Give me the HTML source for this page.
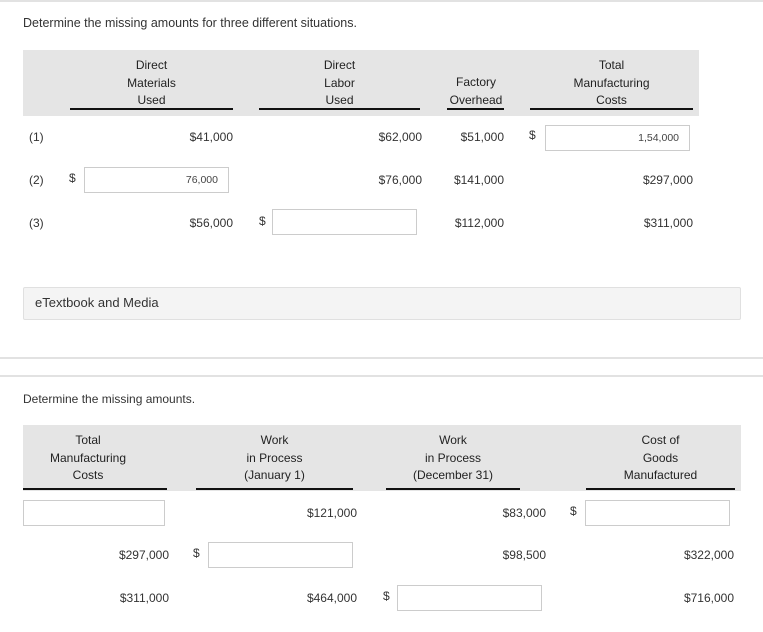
<!DOCTYPE html>
<html><head><meta charset="utf-8"><style>
*{margin:0;padding:0;box-sizing:border-box}
body{width:763px;height:632px;position:relative;background:#fff;font-family:"Liberation Sans",sans-serif;font-size:12px;color:#333;overflow:hidden}
.a{position:absolute;white-space:nowrap;line-height:14px}
.r{position:absolute;white-space:nowrap;line-height:14px;text-align:right}
.hb{position:absolute;background:#e5e5e5}
.ul{position:absolute;height:2px;background:#111}
.h{position:absolute;text-align:center;line-height:17.5px;font-size:12px;color:#222}
.in{position:absolute;border:1px solid #ccc;background:#fff;height:26px;font-size:10.5px;text-align:right;padding-right:10px;line-height:24px;color:#444}
.hl{position:absolute;left:0;width:763px;height:2px;background:#e2e2e2}
</style></head><body>
<div class="hl" style="top:0"></div>
<div class="a" style="left:23px;top:16px;font-size:12.5px">Determine the missing amounts for three different situations.</div>

<div class="hb" style="left:23px;top:50px;width:676px;height:66px"></div>
<div class="h" style="left:70px;width:163px;top:57px">Direct<br>Materials<br>Used</div>
<div class="h" style="left:259px;width:161px;top:57px">Direct<br>Labor<br>Used</div>
<div class="h" style="left:440px;width:72px;top:74px">Factory<br>Overhead</div>
<div class="h" style="left:530px;width:163px;top:57px">Total<br>Manufacturing<br>Costs</div>
<div class="ul" style="left:70px;width:163px;top:108px"></div>
<div class="ul" style="left:259px;width:161px;top:108px"></div>
<div class="ul" style="left:447px;width:57px;top:108px"></div>
<div class="ul" style="left:530px;width:163px;top:108px"></div>

<div class="a" style="left:29px;top:130px">(1)</div>
<div class="r" style="right:530px;top:130px">$41,000</div>
<div class="r" style="right:341px;top:130px">$62,000</div>
<div class="r" style="right:259px;top:130px">$51,000</div>
<div class="a" style="left:529px;top:128px">$</div>
<div class="in" style="left:545px;top:125px;width:145px">1,54,000</div>

<div class="a" style="left:29px;top:173px">(2)</div>
<div class="a" style="left:69px;top:171px">$</div>
<div class="in" style="left:84px;top:167px;width:145px">76,000</div>
<div class="r" style="right:341px;top:173px">$76,000</div>
<div class="r" style="right:259px;top:173px">$141,000</div>
<div class="r" style="right:70px;top:173px">$297,000</div>

<div class="a" style="left:29px;top:216px">(3)</div>
<div class="r" style="right:530px;top:216px">$56,000</div>
<div class="a" style="left:259px;top:214px">$</div>
<div class="in" style="left:272px;top:209px;width:145px"></div>
<div class="r" style="right:259px;top:216px">$112,000</div>
<div class="r" style="right:70px;top:216px">$311,000</div>

<div style="position:absolute;left:23px;top:287px;width:718px;height:33px;background:#f4f4f4;border:1px solid #e0e0e0;border-radius:2px"></div>
<div class="a" style="left:35px;top:296px;font-size:13px">eTextbook and Media</div>

<div class="hl" style="top:357px"></div>
<div class="hl" style="top:375px"></div>

<div class="a" style="left:23px;top:392px">Determine the missing amounts.</div>

<div class="hb" style="left:23px;top:425px;width:718px;height:66px"></div>
<div class="h" style="left:23px;width:130px;top:432px">Total<br>Manufacturing<br>Costs</div>
<div class="h" style="left:196px;width:157px;top:432px">Work<br>in Process<br>(January 1)</div>
<div class="h" style="left:386px;width:134px;top:432px">Work<br>in Process<br>(December 31)</div>
<div class="h" style="left:586px;width:149px;top:432px">Cost of<br>Goods<br>Manufactured</div>
<div class="ul" style="left:23px;width:144px;top:488px"></div>
<div class="ul" style="left:196px;width:157px;top:488px"></div>
<div class="ul" style="left:386px;width:134px;top:488px"></div>
<div class="ul" style="left:586px;width:149px;top:488px"></div>

<div class="in" style="left:23px;top:500px;width:142px"></div>
<div class="r" style="right:406px;top:506px">$121,000</div>
<div class="r" style="right:217px;top:506px">$83,000</div>
<div class="a" style="left:570px;top:504px">$</div>
<div class="in" style="left:585px;top:500px;width:145px"></div>

<div class="r" style="right:594px;top:548px">$297,000</div>
<div class="a" style="left:193px;top:546px">$</div>
<div class="in" style="left:208px;top:542px;width:145px"></div>
<div class="r" style="right:217px;top:548px">$98,500</div>
<div class="r" style="right:29px;top:548px">$322,000</div>

<div class="r" style="right:594px;top:591px">$311,000</div>
<div class="r" style="right:406px;top:591px">$464,000</div>
<div class="a" style="left:383px;top:589px">$</div>
<div class="in" style="left:397px;top:585px;width:145px"></div>
<div class="r" style="right:29px;top:591px">$716,000</div>
</body></html>
